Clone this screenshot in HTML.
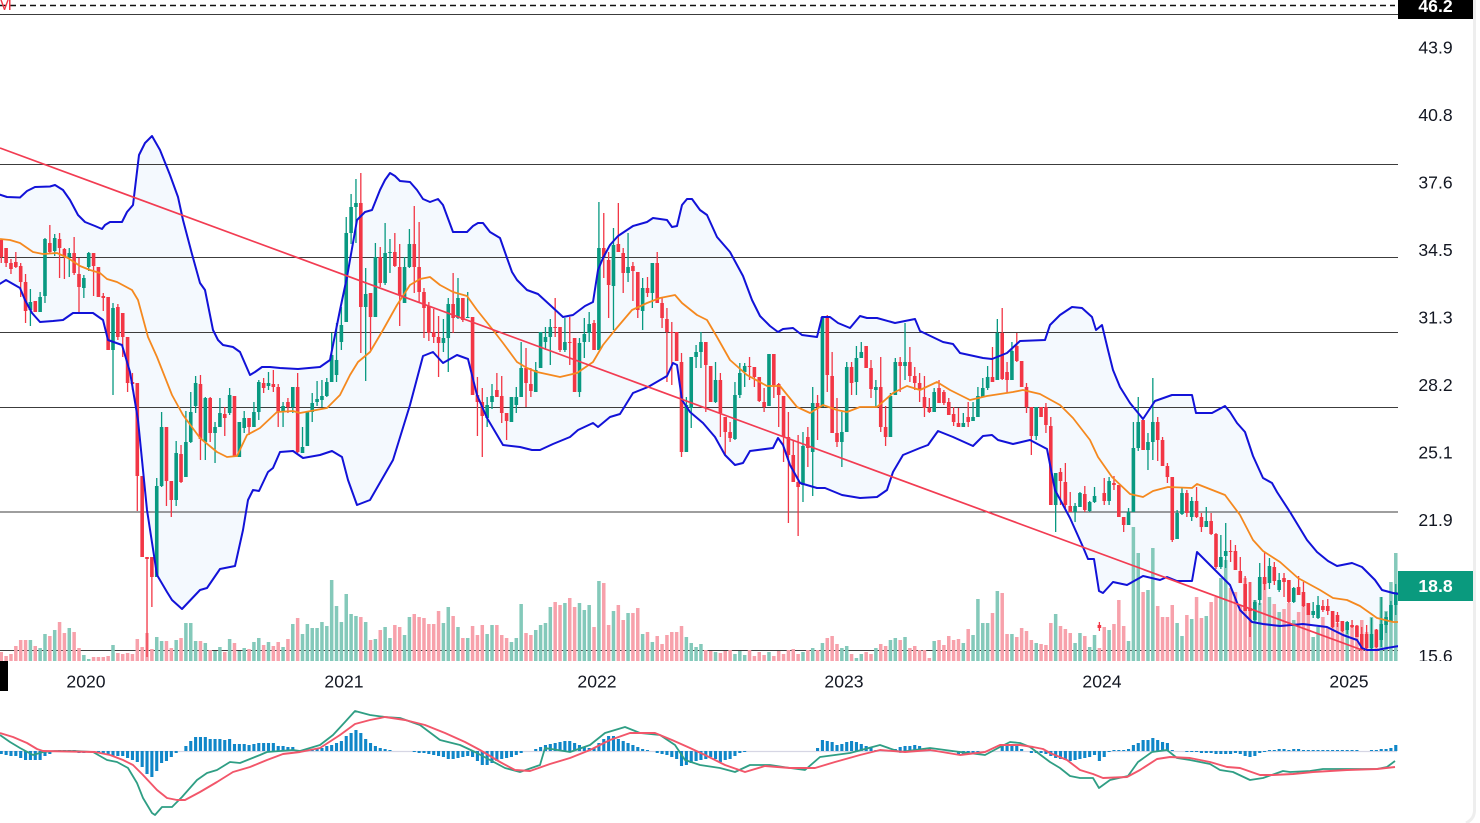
<!DOCTYPE html>
<html><head><meta charset="utf-8"><style>
html,body{margin:0;padding:0;background:#fff;width:1480px;height:823px;overflow:hidden}
svg{display:block;position:absolute;left:0;top:0;overflow:hidden}
text{font-family:"Liberation Sans",sans-serif;font-size:17.6px;fill:#131722}
.b text{text-anchor:middle}
.n path{vector-effect:non-scaling-stroke;fill:none}
</style></head><body>
<svg width="1480" height="823" viewBox="0 0 1480 823">
<defs>
<path id="u" stroke-linejoin="round" d="M-3 820L-2 194L7 197L20 197.5L27 191L35 187L50 186.500L55 185L63 190L70 200L78 215L85 222L95 226L102 229L105 225L110 222L122 222L127 212L133 205L136 180L139 155L145 143L152 136L160 150L170 175L178 197L183 220L191.700 253L200 283L205 290L213 330L218 340L223 345L233 347L240 352L250 375L255 372L262 367L270 367L280 368L298 369L320 367L330 360L333 345L340 310L347 277L357 220L365 212L372 210L380 190L385 180L390 173L395 176L400 181L410 182L417 190L423 199L430 202L438 199L443 205L453 232L467 232L473 226L478 223L483 223L490 232L500 238L507 258L512 272L517 280L527 290L538 294L550 305L563 317L573 315L585 306L593 302L598 270L603 258L610 245L618 236L633 226L647 222L653 218L667 220L672 227L677 226L682 205L687 199L692 199L700 210L707 215L717 237L730 252L743 276L752 300L760 316L770 326L778 332L783 329L793 328L802 335L817 337L822 317L830 317L838 323L850 328L860 316L867 318L877 318L895 323L915 319L920 331L943 342L953 344L960 353L983 358L992 359L1007 353L1020 341L1045 340L1050 325L1060 315L1072 307L1082 308L1092 317L1096 330L1102 325L1108 350L1113 370L1120 387L1130 403L1143 419L1155 401L1172 395L1192 395L1196 413L1212 413L1225 406L1230 412L1237 423L1245 432L1253 456L1263 478L1272 483L1277 492L1290 512L1307 540L1317 552L1328 561L1337 566L1352 563L1362 567L1375 580L1382 590L1393 593L1399 594L1399 820"/>
<path id="l" stroke-linejoin="round" d="M-3 820L-2 285L6 280L20 288L25 300L32 313L40 322L53 321L63 320L73 313L93 313L103 320L108 340L122 345L130 372L138 420L147 510L157 575L167 592L172 600L182 609L200 590L207 588L220 569L235 566L243 530L248 500L253 490L259 491L268 472L273 468L280 452L293 451L303 458L320 455L332 451L342 457L348 480L357 505L370 500L393 460L410 405L423 356L433 352L443 363L457 355L468 359L477 395L487 418L503 445L520 447L532 450L540 450L553 444L570 437L578 430L593 423L598 427L610 417L620 414L633 393L648 387L667 376L673 363L677 365L682 400L690 412L703 423L715 437L725 455L735 465L743 463L750 451L773 448L778 438L783 445L790 465L800 483L817 488L825 488L842 495L860 498L877 497L887 490L893 472L903 455L920 448L928 445L938 431L953 437L973 446L983 436L992 435L998 440L1013 444L1030 440L1047 449L1055 490L1070 518L1083 547L1088 559L1094 559L1099 591L1103 593L1113 582L1127 585L1143 576L1160 580L1167 577L1177 581L1192 581L1197 552L1215 570L1230 585L1240 610L1252 622L1263 624L1280 626L1303 624L1327 627L1343 635L1357 640L1362 648L1367 650L1377 650L1387 648L1399 646L1399 820"/>
</defs>
<use href="#u" fill="#f4f9fe"/>
<use href="#l" fill="#fff"/>

<g stroke="#3c3c3c" stroke-width="1.100" fill="none">
<path d="M0 14.500H1398M0 164.500H1398M0 257.500H1398M0 332.500H1398M0 407.500H1398M0 512H1398M0 650.500H1398"/>
<path d="M0 5.500H1395" stroke="#111" stroke-width="1.400" stroke-dasharray="6 4"/>
</g>
<path d="M0 751.500H1397" stroke="#d6d6e4" stroke-width="1.200"/>

<g class="n" transform="translate(1.25 0) scale(4.859 1)">
<path stroke="#84c9ba" stroke-width="3.500" d="M6 661V640M8 661V648M9 661V634M11 661V630M14 661V628M17 661V655M18 661V659M23 661V645M32 661V637M33 661V641M36 661V640M38 661V623M39 661V623M40 661V641M42 661V643M44 661V651M45 661V647M47 661V639M49 661V651M50 661V648M52 661V642M53 661V638M55 661V642M58 661V647M60 661V624M62 661V634M63 661V624M64 661V628M65 661V628M66 661V622M67 661V626M68 661V580M69 661V606M70 661V622M71 661V594M72 661V614M73 661V616M75 661V622M77 661V639M79 661V627M80 661V638M83 661V635M84 661V617M91 661V623M92 661V607M94 661V627M96 661V638M100 661V634M101 661V625M105 661V642M106 661V638M107 661V604M110 661V630M111 661V625M112 661V623M113 661V607M116 661V603M119 661V603M120 661V610M121 661V605M123 661V581M126 661V611M129 661V613M132 661V634M134 661V642M141 661V637M142 661V643M143 661V647M144 661V644M147 661V652M151 661V654M152 661V651M153 661V655M158 661V652M165 661V652M167 661V648M169 661V643M173 661V648M174 661V646M176 661V658M177 661V654M180 661V648M183 661V640M184 661V638M186 661V637M192 661V641M198 661V643M200 661V635M201 661V599M202 661V623M203 661V623M205 661V591M208 661V634M213 661V643M217 661V614M221 661V643M222 661V633M224 661V647M225 661V635M228 661V630M232 661V641M233 661V527M234 661V553M236 661V590M237 661V548M242 661V623M243 661V636M245 661V619M248 661V616M251 661V578M252 661V560M258 661V600M259 661V603M261 661V597M263 661V612M266 661V620M270 661V637M271 661V627M277 661V625M282 661V617M284 661V597M285 661V611M286 661V582M287 661V553"/>
<path stroke="#f7a1ab" stroke-width="3.500" d="M0 661V652M1 661V656M2 661V654M3 661V646M4 661V640M5 661V640M7 661V646M10 661V636M12 661V622M13 661V633M15 661V632M16 661V648M19 661V657M20 661V657M21 661V657M22 661V656M24 661V653M25 661V654M26 661V653M27 661V654M28 661V639M29 661V647M30 661V633M31 661V649M34 661V641M35 661V648M37 661V638M41 661V641M43 661V650M46 661V652M48 661V643M51 661V649M54 661V645M56 661V646M57 661V642M59 661V639M61 661V618M74 661V617M76 661V640M78 661V630M81 661V625M82 661V627M85 661V614M86 661V617M87 661V618M88 661V624M89 661V624M90 661V611M93 661V616M95 661V638M97 661V626M98 661V635M99 661V625M102 661V625M103 661V635M104 661V638M108 661V633M109 661V635M114 661V602M115 661V605M117 661V598M118 661V607M122 661V627M124 661V583M125 661V625M127 661V605M128 661V620M130 661V613M131 661V608M133 661V632M135 661V636M136 661V644M137 661V635M138 661V632M139 661V632M140 661V626M145 661V650M146 661V651M148 661V653M149 661V651M150 661V650M154 661V650M155 661V656M156 661V652M157 661V655M159 661V656M160 661V651M161 661V654M162 661V650M163 661V649M164 661V654M166 661V650M168 661V650M170 661V638M171 661V636M172 661V644M175 661V654M178 661V652M179 661V654M181 661V644M182 661V646M185 661V640M187 661V648M188 661V646M189 661V650M190 661V650M191 661V658M193 661V640M194 661V645M195 661V636M196 661V640M197 661V639M199 661V629M204 661V613M206 661V593M207 661V634M209 661V637M210 661V628M211 661V631M212 661V640M214 661V644M215 661V645M216 661V623M218 661V626M219 661V629M220 661V633M223 661V636M226 661V648M227 661V627M229 661V624M230 661V600M231 661V626M235 661V592M238 661V606M239 661V617M240 661V617M241 661V605M244 661V615M246 661V597M247 661V618M249 661V602M250 661V597M253 661V588M254 661V592M255 661V605M256 661V578M257 661V582M260 661V581M262 661V604M264 661V609M265 661V603M267 661V612M268 661V605M269 661V615M272 661V617M273 661V627M274 661V617M275 661V623M276 661V628M278 661V625M279 661V625M280 661V620M281 661V632M283 661V629"/>
<path stroke="#089981" stroke-width="1.300" d="M6 289V326M8 292V312M9 238V303M11 234V256M14 248V277M17 275V298M18 252V271M23 303V395M32 478V577M33 412V487M36 441V506M38 411V477M39 392V443M40 376V413M42 397V460M44 422V463M45 398V427M47 388V415M49 422V457M50 411V433M52 402V427M53 380V420M55 372V390M58 402V427M60 387V413M62 427V453M63 412V446M64 393V422M65 381V406M66 380V407M67 378V397M68 333V382M69 323V382M70 307V350M71 217V322M72 194V244M73 179V243M75 268V381M77 243V317M79 223V285M80 239V273M83 257V303M84 229V268M91 319V352M92 298V372M94 278V319M96 292V318M100 397V427M101 384V409M105 397V422M106 387V413M107 342V397M110 362V392M111 332V368M112 327V350M113 319V365M116 318V352M119 338V397M120 318V358M121 312V342M123 202V350M126 228V330M129 233V282M132 278V330M134 263V308M141 397V452M142 357V428M143 345V368M144 332V368M147 362V403M151 382V440M152 363V398M153 363V387M158 354V406M165 432V502M167 387V496M169 317V407M173 412V467M174 362V432M176 346V395M177 342V358M180 380V407M183 393V437M184 358V395M186 323V380M192 388V412M198 413V427M200 402V421M201 387V417M202 378V397M203 366V390M205 319V380M208 342V380M213 407V440M217 473V532M221 503V522M222 492V507M224 501V512M225 487V503M228 477V505M232 508V525M233 422V512M234 397V451M236 433V470M237 378V460M242 510V539M243 487V515M245 497V521M248 507V527M251 535V569M252 523V568M258 600V622M259 563V605M261 558V589M263 573V592M266 587V603M270 602V618M271 596V619M277 621V634M282 618V650M284 597V647M285 612V633M286 601V622M287 584V615"/>
<path stroke="#f23645" stroke-width="1.300" d="M0 240V263M1 248V267M2 259V274M3 252V268M4 263V297M5 274V323M7 301V312M10 225V253M12 233V278M13 248V279M15 237V275M16 258V313M19 253V296M20 267V297M21 293V311M22 297V350M24 304V340M25 313V357M26 337V392M27 373V390M28 383V511M29 476V557M30 557V657M31 557V607M34 427V506M35 481V517M37 445V483M41 375V460M43 397V442M46 407V436M48 396V457M51 418V435M54 378V393M56 370V392M57 384V427M59 398V413M61 373V453M74 173V353M76 293V350M78 247V287M81 233V267M82 244V326M85 206V293M86 222V302M87 288V338M88 302V341M89 309V343M90 316V377M93 273V333M95 298V322M97 317V395M98 377V436M99 388V457M102 373V397M103 376V423M104 413V440M108 348V407M109 368V397M114 298V337M115 327V352M117 317V365M118 338V392M122 320V350M124 213V278M125 252V318M127 203V252M128 248V293M130 262V301M131 272V318M133 277V297M135 252V303M136 298V328M137 308V382M138 322V385M139 332V361M140 353V457M145 342V412M146 366V402M148 373V437M149 417V455M150 422V442M154 357V380M155 367V387M156 377V402M157 388V412M159 354V398M160 383V427M161 396V462M162 412V523M163 440V482M164 435V536M166 427V467M168 395V440M170 315V392M171 352V433M172 398V447M175 362V395M178 346V368M179 360V398M181 357V432M182 406V446M185 357V392M187 347V382M188 367V390M189 373V402M190 376V417M191 398V413M193 380V403M194 390V405M195 398V415M196 407V426M197 408V427M199 402V427M204 347V382M206 308V380M207 362V393M209 333V362M210 361V387M211 383V413M212 407V455M214 407V417M215 403V433M216 417V505M218 468V505M219 463V508M220 492V512M223 486V512M226 622V631M227 478V505M229 476V490M230 485V517M231 517V532M235 420V450M238 417V461M239 437V466M240 463V483M241 477V542M244 490V517M246 487V518M247 513V532M249 513V535M250 533V569M253 540V562M254 545V570M255 557V583M256 576V611M257 582V637M260 552V590M262 562V585M264 573V597M265 580V603M267 576V595M268 582V607M269 603V615M272 600V612M273 599V615M274 611V628M275 612V627M276 621V632M278 620V628M279 625V637M280 627V650M281 625V650M283 629V648"/>
<path stroke="#089981" stroke-width="3.600" d="M6 302V310M8 297V312M9 239V296M11 238V251M14 253V257M17 278V288M18 253V267M23 308V350M32 486V577M33 427V486M36 453V500M38 442V477M39 412V442M40 383V406M42 398V442M44 427V433M45 413V427M47 395V413M49 422V457M50 418V428M52 412V427M53 382V412M55 383V386M58 406V412M60 387V407M62 447V453M63 412V446M64 403V412M65 399V402M66 396V400M67 382V396M68 355V382M69 360V375M70 325V342M71 233V322M72 207V233M73 203V207M75 294V307M77 257V317M79 253V283M80 252V253M83 267V303M84 244V267M91 338V343M92 304V338M94 298V318M96 317V318M100 405V418M101 396V402M105 397V422M106 397V405M107 368V397M110 370V392M111 332V368M112 337V342M113 327V337M116 342V350M119 343V392M120 334V342M121 324V333M123 248V350M126 245V286M129 267V273M132 288V311M134 263V293M141 405V452M142 357V408M143 352V357M144 342V352M147 380V402M151 395V439M152 373V395M153 366V372M158 354V406M165 446V485M167 403V452M169 317V407M173 432V442M174 367V432M176 358V382M177 352V358M180 387V390M183 396V437M184 362V395M186 362V366M192 392V412M198 423V427M200 417V421M201 396V417M202 388V397M203 377V388M205 333V380M208 351V380M213 407V436M217 473V505M221 506V512M222 493V507M224 502V511M225 496V502M228 481V501M232 512V525M233 448V512M234 422V448M236 442V450M237 422V442M242 513V539M243 493V514M245 501V517M248 521V527M251 557V567M252 551V556M258 602V620M259 577V600M261 566V583M263 580V590M266 588V602M270 611V615M271 605V618M277 622V630M282 634V648M284 624V640M285 617V625M286 605V622M287 592V605"/>
<path stroke="#f23645" stroke-width="3.600" d="M0 240V257M1 248V263M2 263V269M3 262V267M4 266V282M5 282V311M7 301V312M10 243V252M12 239V248M13 249V256M15 253V273M16 274V287M19 253V266M20 267V297M21 296V298M22 297V350M24 307V337M25 313V337M26 337V383M27 382V384M28 383V476M29 476V557M30 557V559M31 557V577M34 427V481M35 481V500M37 454V482M41 384V439M43 398V433M46 414V418M48 396V457M51 418V427M54 383V388M56 384V387M57 387V412M59 402V407M61 387V452M74 203V307M76 293V317M78 257V283M81 252V266M82 267V295M85 244V267M86 267V292M87 292V308M88 306V333M89 332V337M90 337V343M93 304V318M95 298V320M97 317V395M98 395V402M99 402V416M102 390V397M103 396V413M104 413V421M108 368V383M109 384V391M114 327V328M115 327V350M117 342V343M118 338V392M122 323V350M124 248V257M125 260V285M127 244V252M128 253V273M130 266V271M131 272V310M133 288V293M135 263V303M136 303V318M137 319V332M138 332V333M139 332V361M140 362V452M145 342V365M146 366V402M148 380V413M149 417V432M150 432V438M154 366V367M155 367V377M156 377V401M157 402V407M159 354V385M160 384V395M161 396V437M162 437V455M163 455V482M164 482V487M166 437V448M168 403V407M170 317V375M171 376V433M172 433V442M175 367V383M178 346V368M179 368V389M181 387V427M182 427V437M185 362V366M187 362V376M188 376V383M189 383V390M190 397V408M191 408V412M193 388V403M194 392V403M195 402V415M196 414V422M197 423V427M199 417V422M204 377V382M206 333V379M207 372V380M209 346V361M210 361V387M211 387V407M212 407V436M214 407V417M215 407V425M216 426V505M218 472V481M219 482V505M220 506V512M223 494V510M226 625V628M227 493V501M229 483V485M230 485V517M231 517V525M235 420V450M238 422V440M239 440V466M240 466V477M241 477V540M244 493V513M246 501V517M247 517V527M249 521V534M250 534V567M253 551V552M254 551V570M255 571V583M256 584V611M257 608V611M260 577V584M262 567V581M264 578V582M265 580V602M267 587V595M268 592V606M269 603V615M272 606V610M273 606V611M274 611V627M275 615V622M276 621V631M278 625V627M279 626V637M280 634V650M281 634V648M283 630V647"/>
<path stroke="#0f86c8" stroke-width="3.100" d="M0 751V754M1 751V755M2 751V756M3 751V756M4 751V758M5 751V760M6 751V760M7 751V760M8 751V760M9 751V756M10 751V754M11 751V752M12 751V750M13 751V750M14 751V750M15 751V750M16 751V753M17 751V753M20 751V752M21 751V753M22 751V755M23 751V756M24 751V756M25 751V756M26 751V758M27 751V760M28 751V762M29 751V767M30 751V774M31 751V777M32 751V771M33 751V763M34 751V761M35 751V757M36 751V753M38 751V746M39 751V741M40 751V737M41 751V737M42 751V737M43 751V739M44 751V739M45 751V739M46 751V740M47 751V739M48 751V744M49 751V744M50 751V744M51 751V745M52 751V744M53 751V743M54 751V743M55 751V743M56 751V743M57 751V746M58 751V746M59 751V747M60 751V747M64 751V750M65 751V749M66 751V748M67 751V746M68 751V745M69 751V743M70 751V741M71 751V736M72 751V733M73 751V730M74 751V733M75 751V739M76 751V743M77 751V746M78 751V748M79 751V749M80 751V750M85 751V752M86 751V753M87 751V753M88 751V754M89 751V755M90 751V756M91 751V757M92 751V759M93 751V759M94 751V758M95 751V757M96 751V756M97 751V757M98 751V761M99 751V765M100 751V765M101 751V763M102 751V761M103 751V759M104 751V758M105 751V757M106 751V755M107 751V753M110 751V749M111 751V747M112 751V745M113 751V744M114 751V743M115 751V742M116 751V741M117 751V741M118 751V743M119 751V745M120 751V747M121 751V748M122 751V748M123 751V743M124 751V739M125 751V736M126 751V736M127 751V739M128 751V741M129 751V743M130 751V745M131 751V747M132 751V749M133 751V750M135 751V753M136 751V754M137 751V755M138 751V757M139 751V759M140 751V766M141 751V765M142 751V763M143 751V761M144 751V760M145 751V759M146 751V757M147 751V759M148 751V762M149 751V760M150 751V759M151 751V756M152 751V753M153 751V752M168 751V748M169 751V740M170 751V741M171 751V742M172 751V745M173 751V744M174 751V742M175 751V741M176 751V742M177 751V744M178 751V746M179 751V748M180 751V750M184 751V749M185 751V747M186 751V746M187 751V746M188 751V745M189 751V746M190 751V748M191 751V749M196 751V752M197 751V754M198 751V755M199 751V754M200 751V753M201 751V752M206 751V745M207 751V745M208 751V745M209 751V745M210 751V749M212 751V753M213 751V753M214 751V753M215 751V754M216 751V756M217 751V758M218 751V759M219 751V760M220 751V761M221 751V760M222 751V759M223 751V758M224 751V757M225 751V755M226 751V761M227 751V757M228 751V752M229 751V750M230 751V750M231 751V750M232 751V749M233 751V745M234 751V743M235 751V740M236 751V740M237 751V738M238 751V740M239 751V742M240 751V743M241 751V750M244 751V752M245 751V752M246 751V752M247 751V753M248 751V753M249 751V753M250 751V754M251 751V754M252 751V754M253 751V754M254 751V753M255 751V754M256 751V756M257 751V757M258 751V756M259 751V753M260 751V752M261 751V750M262 751V750M263 751V749M264 751V749M265 751V750M266 751V749M267 751V749M268 751V750M269 751V750M270 751V750M271 751V750M272 751V750M273 751V750M274 751V750M275 751V750M276 751V750M277 751V750M278 751V750M279 751V750M282 751V750M283 751V750M284 751V749M285 751V749M286 751V748M287 751V745"/>
</g>

<path fill="none" stroke="#2f9e84" stroke-width="1.800" stroke-linejoin="round" d="M0 735L10 742L20 748L33 755L43 752L55 751L75 751L93 752L107 760L117 762L128 768L137 783L143 798L152 813L155 815L162 807L172 807L182 797L197 780L207 773L217 770L230 762L240 763L260 755L267 752L293 750L300 751L320 745L333 735L345 722L355 711L370 715L385 717L400 718L420 725L440 740L460 745L475 752L490 760L505 768L520 772L540 765L545 748L570 752L590 745L605 733L625 727L640 733L660 735L675 745L685 760L700 765L720 768L735 772L750 765L770 765L790 768L805 770L820 757L835 755L850 753L880 745L900 752L930 748L960 752L985 755L1000 747L1010 742L1020 743L1030 747L1050 762L1060 768L1070 776L1080 778L1093 778L1099 788L1110 780L1128 776L1138 762L1152 752L1167 750L1177 758L1190 760L1210 764L1220 770L1233 772L1250 780L1263 778L1283 771L1290 772L1310 771L1323 769L1377 769L1387 767L1395 761"/>
<path fill="none" stroke="#f2566a" stroke-width="1.900" stroke-linejoin="round" d="M0 733L13 737L27 743L37 749L43 751L95 752L110 755L123 760L133 765L143 775L157 790L167 798L177 800L185 800L200 792L217 782L233 772L250 767L267 760L283 754L300 752L320 748L340 735L355 724L370 720L385 717L405 720L425 725L445 733L465 742L480 750L500 762L515 770L530 771L550 764L570 758L590 750L610 740L630 733L655 733L672 740L690 748L705 755L725 765L745 772L765 766L790 768L815 768L835 762L860 755L880 750L905 752L930 750L960 755L985 752L1000 745L1020 745L1033 747L1043 749L1050 753L1067 760L1080 770L1093 774L1103 778L1127 777L1140 770L1157 759L1170 757L1190 758L1210 762L1227 767L1240 768L1260 775L1273 775L1293 774L1313 772L1347 770L1377 769L1395 767"/>

<path fill="none" stroke="#f5891f" stroke-width="1.800" stroke-linejoin="round" d="M0 239L10 240L20 243L33 252L43 254L57 253L68 258L80 266L90 270L100 273L107 279L117 282L132 290L138 300L148 337L157 357L172 395L183 415L200 438L217 452L227 457L237 456L247 435L260 428L277 412L293 411L300 413L327 408L340 395L350 375L358 362L370 352L383 330L397 305L410 285L420 279L430 277L440 285L453 292L467 296L477 310L493 330L503 343L517 362L527 368L537 372L560 377L577 373L593 362L603 345L615 330L632 310L647 303L660 298L675 295L682 303L697 315L707 320L717 337L730 360L747 375L767 386L780 386L797 407L810 413L823 405L837 410L847 412L860 407L877 407L893 393L907 386L920 390L937 382L950 390L970 400L987 396L1013 392L1023 390L1040 394L1060 405L1073 418L1090 440L1098 457L1112 477L1130 494L1143 497L1153 491L1168 487L1192 488L1197 484L1225 495L1240 515L1253 540L1263 551L1280 562L1298 578L1320 590L1333 598L1347 600L1360 606L1377 618L1393 622L1398 622"/>
<use href="#u" fill="none" stroke="#1212d8" stroke-width="2"/>
<use href="#l" fill="none" stroke="#1212d8" stroke-width="2"/>
<path d="M0 148L1362 650" stroke="#f23c52" stroke-width="1.700" fill="none"/>

<rect x="1398" y="0" width="76" height="823" fill="#fff"/>
<path d="M1474.500 0V810Q1474.500 819 1466 823" fill="none" stroke="#eeeeee" stroke-width="3"/>
<rect x="0" y="661" width="8" height="30" fill="#000"/>
<g class="b">
<rect x="1398" y="0" width="75" height="19" fill="#000"/>
<text x="1435.500" y="12" style="fill:#fff;font-weight:700">46.2</text>
<text x="1435.500" y="53.500">43.9</text>
<text x="1435.500" y="121">40.8</text>
<text x="1435.500" y="188.500">37.6</text>
<text x="1435.500" y="256">34.5</text>
<text x="1435.500" y="323.500">31.3</text>
<text x="1435.500" y="391">28.2</text>
<text x="1435.500" y="458.500">25.1</text>
<text x="1435.500" y="526">21.9</text>
<rect x="1398" y="571" width="75" height="30" fill="#0a9a7e"/>
<text x="1435.500" y="592" style="fill:#fff;font-weight:700">18.8</text>
<text x="1435.500" y="662">15.6</text>
<rect x="1398" y="661" width="75" height="9" fill="#fff"/>
<text x="86" y="687.500">2020</text>
<text x="344" y="687.500">2021</text>
<text x="597" y="687.500">2022</text>
<text x="844" y="687.500">2023</text>
<text x="1102" y="687.500">2024</text>
<text x="1349" y="687.500">2025</text>
</g>
<text x="-3" y="10" style="font-size:18px;fill:#f23645">M</text>
</svg>
</body></html>
